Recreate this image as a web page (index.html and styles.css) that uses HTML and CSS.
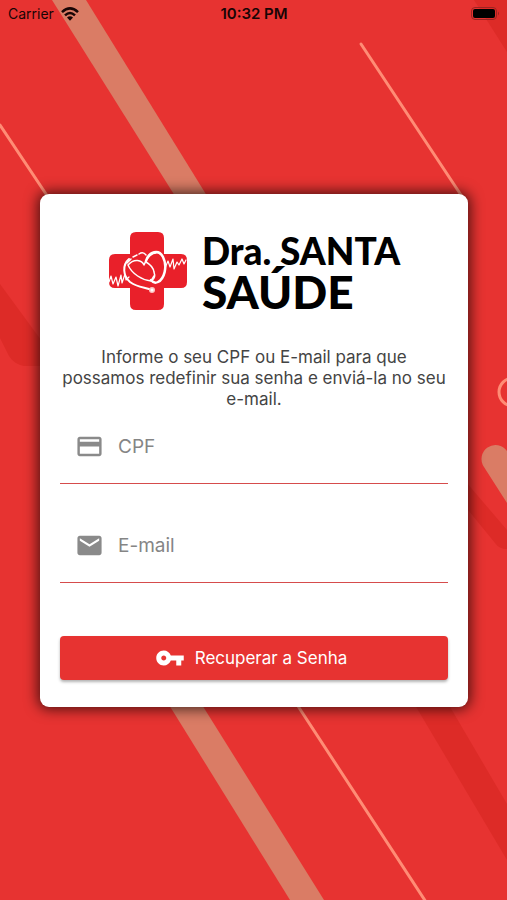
FILE: index.html
```html
<!DOCTYPE html>
<html lang="pt-BR">

<head>
    <meta charset="UTF-8">
    <meta name="viewport" content="width=device-width, initial-scale=1.0">
    <title>Dra. Santa Saúde</title>
    <link rel="stylesheet" href="styles.css">
</head>

<body>
    <svg class="background" viewBox="0 0 507 900" preserveAspectRatio="xMidYMid slice" aria-hidden="true">
        <g fill="#dd2b27">
            <path d="M474 0H507V52Z" />
            <path d="M0 284L60 366H24Q14 364 9 356L0 338Z" />
            <path d="M460 475L507 530V549Q499 549 495 543L460 500Z" />
            <path d="M412 700H446L507 804V860Z" />
        </g>
        <g fill="#da7c65">
            <path d="M52 0H86L212 204H180Z" />
            <path d="M166 700H199L324 900H290Z" />
            <path d="M507 451A14 14 0 0 0 484 467L507 503Z" />
        </g>
        <g fill="none" stroke="#ff8c75" stroke-width="3" stroke-linecap="round">
            <path d="M0 125L50 200" />
            <path d="M361 44L461 195" />
            <path d="M294 700L426 902" />
            <circle cx="513" cy="392" r="14" />
        </g>
    </svg>

    <header class="status-bar">
        <div class="carrier">
            <span>Carrier</span>
            <svg class="wifi" viewBox="0 0 18 14" aria-hidden="true">
                <g fill="none" stroke="#180505" stroke-width="2.5">
                    <path d="M1 5.2Q9-2.4 17 5.2" />
                    <path d="M4 8.4Q9 3.6 14 8.4" />
                </g>
                <path d="M6 10.6Q9 7.8 12 10.6L9 13.8Z" fill="#180505" />
            </svg>
        </div>
        <div class="time">10:32 PM</div>
        <svg class="battery" viewBox="0 0 29 14" aria-hidden="true">
            <rect x="0.5" y="0.5" width="25" height="12" rx="3.5" fill="none" stroke="#9b2422" />
            <rect x="2" y="2" width="22" height="9" rx="2" fill="#000" />
            <path d="M27 4.5Q29 6.5 27 8.5Z" fill="#9b2422" />
        </svg>
    </header>

    <main class="content">
        <form class="card">
            <div class="logo">
                <svg class="logo-mark" viewBox="0 0 80 80" aria-hidden="true">
                    <path fill="#e9202a" d="M28 1H50Q56 1 56 7V23H73Q79 23 79 29V51Q79 57 73 57H56V73Q56 79 50 79H28Q22 79 22 73V57H7Q1 57 1 51V29Q1 23 7 23H22V7Q22 1 28 1Z" />
                    <g fill="none" stroke="#fff" stroke-linecap="round" stroke-linejoin="round">
                        <path stroke-width="1.2" d="M1 51L3 45L5 53L8 46L10 55L13 44L14 52L17 43L18 49L21 46" />
                        <path stroke-width="1.2" d="M57 37L60 30L62 36L65 28L66 38L69 31L71 34L74 28L76 33L78 29" />
                        <path stroke-width="2" d="M21 28C14 34 15 45 22 51C30 57 38 56 44 59" />
                        <path stroke-width="1.5" d="M25 26L29 24M31 23Q35 20 38 24M19 32L23 28" />
                        <path stroke-width="1.5" d="M20 34C26 27 34 29 36 34C39 26 44 22 48 22M20 34C24 43 34 49 43 50L46 45" />
                        <path stroke-width="2.5" d="M38 30C41 20 51 18 55 26C60 36 56 48 50 51Q46 53 43 49" />
                        <path stroke-width="1.5" d="M38 31Q45 35 46 41Q48 47 44 49" />
                    </g>
                    <circle cx="44" cy="59" r="3" fill="#ffc5c3" />
                    <circle cx="44" cy="59" r="1.5" fill="#fff" />
                </svg>
                <h1 class="logo-name">
                    <span class="logo-top">Dra. SANTA</span>
                    <span class="logo-bottom">SAÚDE</span>
                </h1>
            </div>

            <p class="message">Informe o seu CPF ou E-mail para que possamos redefinir sua senha e enviá-la no seu e-mail.</p>

            <div class="field">
                <label for="cpf">
                    <svg class="field-icon" viewBox="0 0 24 24" role="img" aria-label="CPF">
                        <path d="M20 4H4c-1.110 0-1.990.89-1.990 2L2 18c0 1.110.89 2 2 2h16c1.110 0 2-.89 2-2V6c0-1.110-.89-2-2-2zm0 14H4v-6h16v6zm0-10H4V6h16v2z" />
                    </svg>
                </label>
                <input type="text" id="cpf" name="cpf" placeholder="CPF">
            </div>

            <div class="field">
                <label for="email">
                    <svg class="field-icon" viewBox="0 0 24 24" role="img" aria-label="E-mail">
                        <path d="M20 4H4c-1.100 0-1.990.9-1.990 2L2 18c0 1.100.9 2 2 2h16c1.100 0 2-.9 2-2V6c0-1.100-.9-2-2-2zm0 4l-8 5-8-5V6l8 5 8-5v2z" />
                    </svg>
                </label>
                <input type="email" id="email" name="email" placeholder="E-mail">
            </div>

            <button type="submit" class="submit">
                <svg class="key-icon" viewBox="0 0 24 24" aria-hidden="true">
                    <path d="M12.650 10C11.830 7.670 9.610 6 7 6c-3.310 0-6 2.690-6 6s2.690 6 6 6c2.610 0 4.830-1.670 5.650-4H17v4h4v-4h2v-4H12.650zM7 14c-1.100 0-2-.9-2-2s.9-2 2-2 2 .9 2 2-.9 2-2 2z" />
                </svg>
                <span>Recuperar a Senha</span>
            </button>
        </form>
    </main>
</body>

</html>
```

FILE: styles.css
```css
* {
    box-sizing: border-box;
}

body {
    position: relative;
    display: flex;
    flex-direction: column;
    min-height: 100vh;
    margin: 0;
    background-color: #e73331;
    font-family: Inter, "Liberation Sans", sans-serif;
}

.background {
    position: absolute;
    top: 0;
    left: 0;
    width: 100%;
    height: 100%;
    z-index: -1;
}

/*----- status bar -----*/
.status-bar {
    display: grid;
    grid-template-columns: 1fr auto 1fr;
    align-items: center;
    height: 27px;
    padding: 0 7px 0 8px;
    color: #180505;
    font-size: 14px;
}

.carrier {
    display: flex;
    align-items: center;
    gap: 7px;
}

.wifi {
    width: 18px;
    height: 14px;
}

.time {
    font-size: 15px;
    font-weight: 600;
}

.battery {
    justify-self: end;
    width: 29px;
    height: 14px;
}

/*----- card -----*/
.content {
    flex: 1;
    display: flex;
    align-items: center;
    justify-content: center;
    padding: 0 39px 26px 40px;
}

.card {
    flex: 1;
    max-width: 480px;
    padding: 36px 20px 27px;
    background-color: white;
    border-radius: 9px;
    box-shadow: 0 0 14px 2px rgba(0, 0, 0, 0.7);
}

.logo {
    display: flex;
    align-items: center;
    justify-content: center;
    gap: 14px;
}

.logo-mark {
    width: 80px;
    height: 80px;
}

.logo-name {
    margin: 0;
    color: black;
    font-family: Lato, "Liberation Sans", sans-serif;
    font-weight: 900;
}

.logo-top,
.logo-bottom {
    display: block;
    line-height: 41px;
}

.logo-top {
    font-size: 37px;
}

.logo-bottom {
    font-size: 46px;
}

.message {
    margin: 35px 0 0;
    color: #444;
    font-size: 17px;
    line-height: 21px;
    text-align: center;
}

.field {
    display: flex;
    align-items: center;
    gap: 14px;
    height: 74px;
    padding-left: 15px;
    border-bottom: 1px solid #d64c4c;
}

.field + .field {
    margin-top: 25px;
}

.field label {
    display: flex;
}

.field-icon {
    width: 29px;
    height: 29px;
    fill: #8a8a8a;
}

.field input {
    flex: 1;
    min-width: 0;
    padding: 0;
    border: none;
    outline: none;
    background: none;
    color: #444;
    font-family: inherit;
    font-size: 19px;
}

.field input::placeholder {
    color: #858585;
    opacity: 1;
}

.submit {
    display: flex;
    align-items: center;
    justify-content: center;
    gap: 10px;
    width: 100%;
    height: 44px;
    margin-top: 53px;
    padding: 0 6px 0 0;
    border: none;
    border-radius: 4px;
    background-color: #e73331;
    box-shadow: 0 2px 3px rgba(0, 0, 0, 0.3);
    color: white;
    font-family: inherit;
    font-size: 17px;
    cursor: pointer;
}

.key-icon {
    width: 30px;
    height: 30px;
    fill: white;
}
```
